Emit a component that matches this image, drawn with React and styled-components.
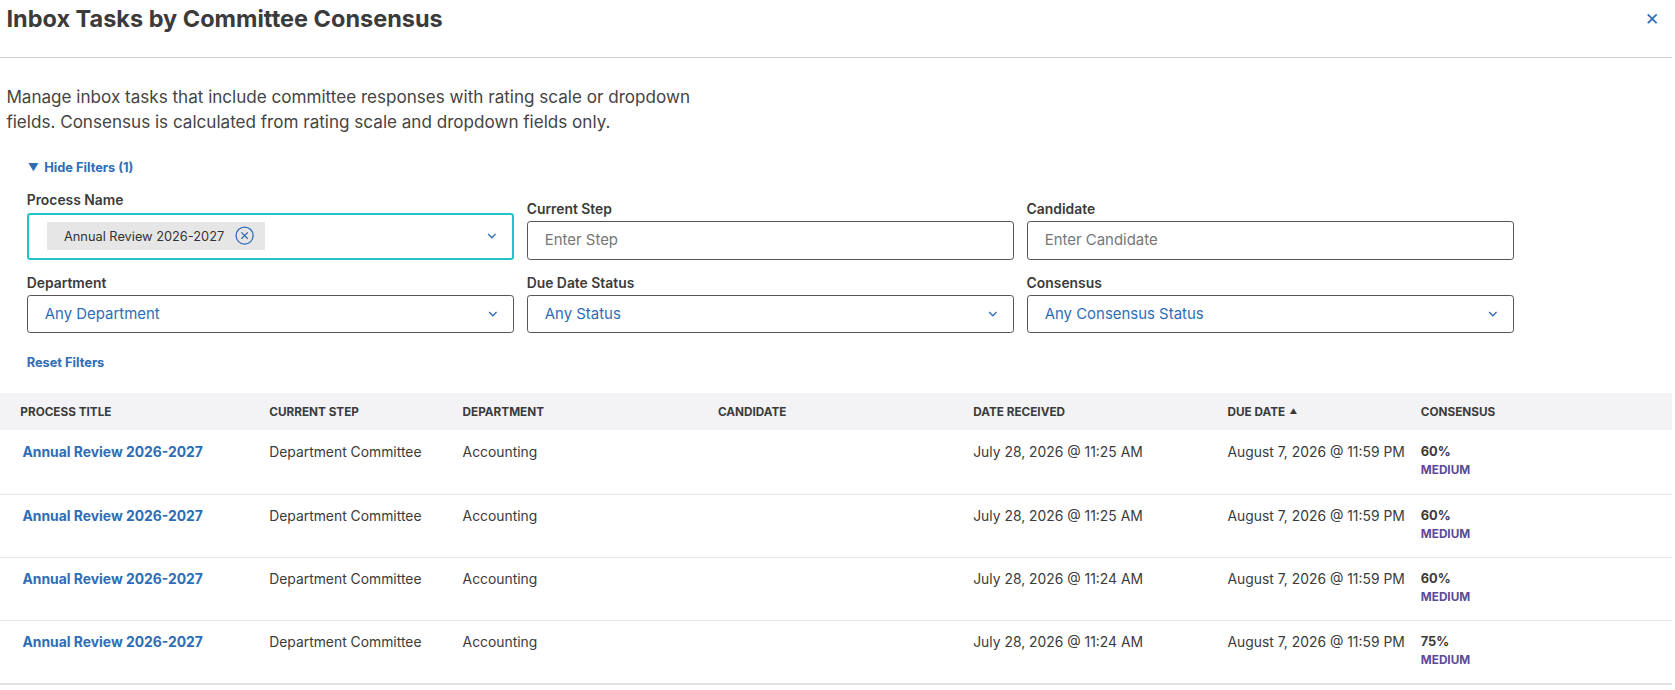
import React from "react";
import styled, { createGlobalStyle } from "styled-components";

const Global = createGlobalStyle`
  body { margin: 0; font-family: Inter, "Noto Sans", sans-serif; color: #333; background: #fff; }
`;

const Page = styled.div`
  width: 1565px;
  zoom: 1.0683;
`;
const Header = styled.div`
  display: flex;
  justify-content: space-between;
  align-items: center;
  height: 54px;
  padding: 0 12px 18px 6px;
  border-bottom: 1px solid #cfcfcf;
  box-sizing: border-box;
`;
const Title = styled.h1`
  margin: 0;
  font-size: 22px;
  font-weight: 700;
  color: #3b3b3b;
`;
const Close = styled.span`
  color: #2f6db5;
  font-size: 16px;
`;
const Body = styled.div`
  padding: 26px 0 0 6px;
`;
const Intro = styled.p`
  margin: 0;
  width: 650px;
  font-size: 16px;
  line-height: 23px;
  color: #444;
`;
const LinkBtn = styled.div`
  color: #2f6db5;
  font-size: 12px;
  font-weight: 700;
  margin: ${(p) => p.$m};
  display: flex;
  align-items: center;
  gap: 5px;
`;
const Filters = styled.div`
  display: grid;
  grid-template-columns: repeat(3, 456px);
  column-gap: 12px;
  row-gap: 14px;
  padding-left: 19px;
  align-items: end;
`;
const Field = styled.div`
  display: flex;
  flex-direction: column;
  gap: 4px;
`;
const Label = styled.label`
  font-size: 13px;
  font-weight: 600;
  color: #3b3b3b;
`;
const Box = styled.div`
  height: ${(p) => (p.$tall ? "44px" : "36px")};
  box-sizing: border-box;
  border: ${(p) => (p.$focus ? "2px solid #25c3c9" : "1px solid #555")};
  border-radius: 3px;
  display: flex;
  align-items: center;
  justify-content: space-between;
  padding: 0 14px 0 ${(p) => (p.$focus ? "17px" : "16px")};
  font-size: 14px;
  color: ${(p) => (p.$select ? "#2f6db5" : "#777")};
`;
const Chip = styled.span`
  background: #e6e6e6;
  padding: 4px 10px 4px 16px;
  font-size: 12px;
  color: #333;
  display: flex;
  align-items: center;
  gap: 10px;
`;
const Table = styled.div`
  margin-top: 22px;
  border-bottom: 2px solid #e2e2e2;
`;
const Row = styled.div`
  display: grid;
  grid-template-columns: 233px 181px 239px 239px 238px 181px 1fr;
  padding-left: 19px;
  height: ${(p) => (p.$head ? "35px" : "59px")};
  align-items: ${(p) => (p.$head ? "center" : "start")};
  padding-top: ${(p) => (p.$head ? "0" : "13px")};
  box-sizing: border-box;
  background: ${(p) => (p.$head ? "#f3f3f5" : "#fff")};
  border-top: ${(p) => (p.$head || p.$first ? "none" : "1px solid #e6e6e6")};
  font-size: 13px;
  color: #3b3b3b;
`;
const Th = styled.div`
  font-size: 11px;
  font-weight: 700;
  color: #3b3b3b;
  display: flex;
  align-items: center;
  gap: 4px;
`;
const TitleLink = styled.a`
  color: #2f6db5;
  font-weight: 700;
  padding-left: 2px;
`;
const Pct = styled.div`
  font-weight: 700;
  font-size: 12px;
`;
const Level = styled.div`
  font-weight: 700;
  font-size: 11px;
  color: #5b4b9b;
  margin-top: 3px;
`;

const Chevron = () => (
  <svg width="9" height="6" viewBox="0 0 9 6"><path d="M1 1l3.5 3.5L8 1" fill="none" stroke="#2f6db5" strokeWidth="1.2" /></svg>
);

const rows = [
  ["July 28, 2026 @ 11:25 AM", "60%"],
  ["July 28, 2026 @ 11:25 AM", "60%"],
  ["July 28, 2026 @ 11:24 AM", "60%"],
  ["July 28, 2026 @ 11:24 AM", "75%"],
];

export default function App() {
  return (
    <Page>
      <Global />
      <Header>
        <Title>Inbox Tasks by Committee Consensus</Title>
        <Close>✕</Close>
      </Header>
      <Body>
        <Intro>
          Manage inbox tasks that include committee responses with rating scale or dropdown fields. Consensus is calculated from rating scale and dropdown fields only.
        </Intro>
        <LinkBtn $m="24px 0 16px 20px"><span style={{ fontSize: 10 }}>▼</span>Hide Filters (1)</LinkBtn>
        <Filters>
          <Field>
            <Label>Process Name</Label>
            <Box $tall $focus>
              <Chip>Annual Review 2026-2027
                <svg width="18" height="18" viewBox="0 0 18 18"><circle cx="9" cy="9" r="8" fill="none" stroke="#2f6db5" strokeWidth="1.2" /><path d="M6 6l6 6M12 6l-6 6" stroke="#2f6db5" strokeWidth="1.2" /></svg>
              </Chip>
              <Chevron />
            </Box>
          </Field>
          <Field><Label>Current Step</Label><Box>Enter Step</Box></Field>
          <Field><Label>Candidate</Label><Box>Enter Candidate</Box></Field>
          <Field><Label>Department</Label><Box $select>Any Department<Chevron /></Box></Field>
          <Field><Label>Due Date Status</Label><Box $select>Any Status<Chevron /></Box></Field>
          <Field><Label>Consensus</Label><Box $select>Any Consensus Status<Chevron /></Box></Field>
        </Filters>
        <LinkBtn $m="20px 0 0 19px">Reset Filters</LinkBtn>
      </Body>
      <Table>
        <Row $head>
          <Th>PROCESS TITLE</Th><Th>CURRENT STEP</Th><Th>DEPARTMENT</Th><Th>CANDIDATE</Th>
          <Th>DATE RECEIVED</Th><Th>DUE DATE <span style={{ fontSize: 7 }}>▲</span></Th><Th>CONSENSUS</Th>
        </Row>
        {rows.map(([d, p], i) => (
          <Row key={i} $first={i === 0}>
            <TitleLink>Annual Review 2026-2027</TitleLink>
            <div>Department Committee</div>
            <div>Accounting</div>
            <div></div>
            <div>{d}</div>
            <div>August 7, 2026 @ 11:59 PM</div>
            <div><Pct>{p}</Pct><Level>MEDIUM</Level></div>
          </Row>
        ))}
      </Table>
    </Page>
  );
}
